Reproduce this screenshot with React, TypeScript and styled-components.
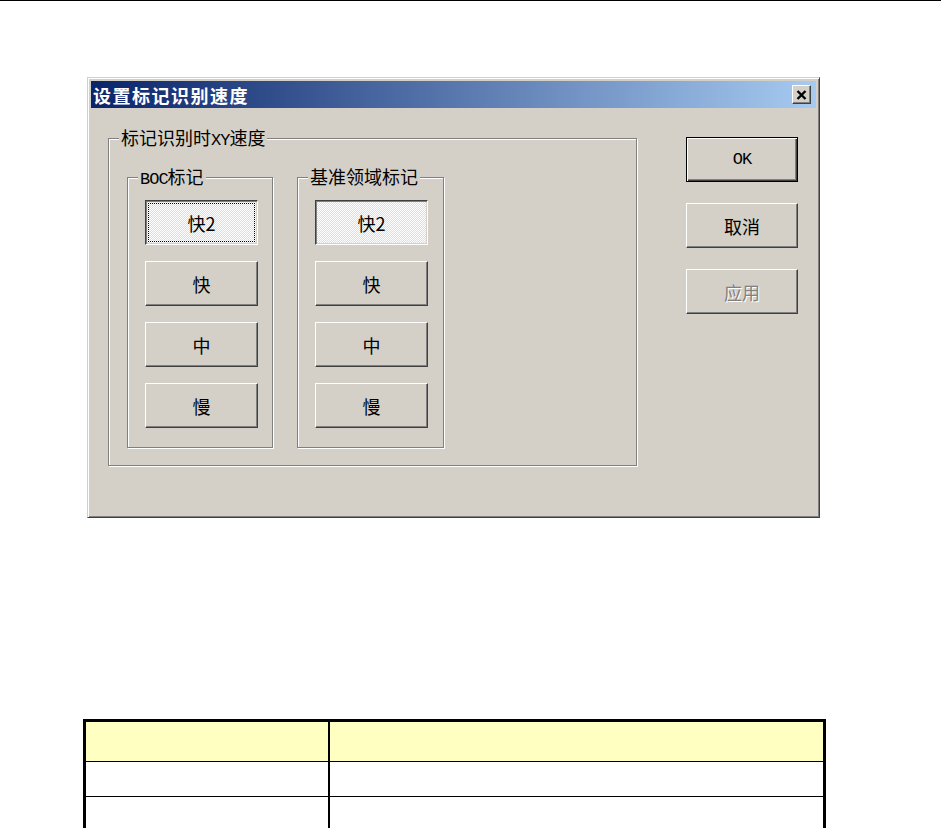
import React from 'react'
import styled, { createGlobalStyle, css } from 'styled-components'

const face = '#d4d0c8'

const GlobalStyle = createGlobalStyle`
  html, body {
    margin: 0;
    height: 828px;
    overflow: hidden;
    background: #fff;
    font-family: "Noto Sans CJK SC", "Noto Sans", sans-serif;
  }
`

const Page = styled.div`
  border-top: 1px solid #000;
`

const Dialog = styled.div`
  margin: 76px 0 0 87px;
  width: 733px;
  height: 441px;
  box-sizing: border-box;
  padding: 3px;
  background: ${face};
  border: 1px solid;
  border-color: ${face} #404040 #404040 ${face};
  box-shadow: inset 1px 1px #fff, inset -1px -1px #808080;
`

const TitleBar = styled.div`
  height: 27px;
  display: flex;
  align-items: center;
  justify-content: space-between;
  padding: 0 5px 0 2px;
  background: linear-gradient(to right, #0a246a, #a6caf0);
`

const Title = styled.span`
  color: #fff;
  font-weight: bold;
  font-size: 18px;
  line-height: 22px;
  letter-spacing: 1.5px;
`

const CloseButton = styled.div`
  width: 19px;
  height: 19px;
  box-sizing: border-box;
  display: flex;
  align-items: center;
  justify-content: center;
  background: ${face};
  border: 1px solid;
  border-color: #fff #404040 #404040 #fff;
  box-shadow: inset -1px -1px #808080;
`

const Body = styled.div`
  display: flex;
  justify-content: space-between;
  align-items: flex-start;
  padding: 30px 18px 0 17px;
`

const GroupBox = styled.div<{ $w: number; $h: number; $outer?: boolean }>`
  position: relative;
  box-sizing: border-box;
  width: ${(p) => p.$w}px;
  height: ${(p) => p.$h}px;
  border: 1px solid #808080;
  box-shadow: inset 1px 1px #fff, 1px 1px #fff;
  display: flex;
  ${(p) =>
    p.$outer
      ? css`
          gap: 24px;
          padding: 38px 0 0 18px;
        `
      : css`
          flex-direction: column;
          gap: 16px;
          padding: 22px 0 0 17px;
        `}
`

const GroupLabel = styled.span`
  position: absolute;
  top: -12px;
  left: 10px;
  padding: 0 2px;
  background: ${face};
  font-size: 18px;
  line-height: 20px;
  color: #000;
  white-space: nowrap;
`

const Latin = styled.span`
  font-family: "Liberation Mono", "DejaVu Sans Mono", monospace;
  font-size: 17px;
  letter-spacing: -1px;
`

const Button = styled.div<{
  $pressed?: boolean
  $focus?: boolean
  $default?: boolean
  $disabled?: boolean
  $w?: number
}>`
  width: ${(p) => p.$w ?? 113}px;
  height: 45px;
  box-sizing: border-box;
  display: flex;
  align-items: center;
  justify-content: center;
  font-size: 18px;
  line-height: 20px;
  color: #000;
  background: ${face};
  border: 1px solid;
  border-color: #fff #404040 #404040 #fff;
  box-shadow: inset -1px -1px #808080;

  ${(p) =>
    p.$pressed &&
    css`
      border-color: #404040 #fff #fff #404040;
      box-shadow: inset 1px 1px #808080, inset -1px -1px ${face};
      background-color: #fff;
      background-image: conic-gradient(#fff 25%, #e0ddd6 0 50%, #fff 0 75%, #e0ddd6 0);
      background-size: 2px 2px;
    `}

  ${(p) =>
    p.$focus &&
    css`
      outline: 1px dotted #000;
      outline-offset: -4px;
    `}

  ${(p) =>
    p.$default &&
    css`
      border: 1px solid #000;
      box-shadow: inset 1px 1px #fff, inset -1px -1px #404040, inset -2px -2px #808080;
    `}

  ${(p) =>
    p.$disabled &&
    css`
      color: #808080;
      text-shadow: 1px 1px 0 #fff;
    `}
`

const SideColumn = styled.div`
  display: flex;
  flex-direction: column;
  gap: 21px;
  margin-top: -1px;
`

const Table = styled.div`
  margin: 201px 0 0 83px;
  width: 743px;
  box-sizing: border-box;
  border: 3px solid #000;
`

const Row = styled.div<{ $head?: boolean; $last?: boolean }>`
  display: grid;
  grid-template-columns: 244px 1fr;
  height: ${(p) => (p.$head ? 40 : 35)}px;
  box-sizing: border-box;
  border-bottom: ${(p) => (p.$last ? 'none' : '1px solid #000')};
  background: ${(p) => (p.$head ? '#ffffc2' : '#fff')};
`

const Cell = styled.div<{ $first?: boolean }>`
  border-right: ${(p) => (p.$first ? '2px solid #000' : 'none')};
`

const speeds = ['快2', '快', '中', '慢']

const SpeedGroup: React.FC<{ label: React.ReactNode; width: number; focus?: boolean }> = ({
  label,
  width,
  focus,
}) => (
  <GroupBox $w={width} $h={271}>
    <GroupLabel>{label}</GroupLabel>
    {speeds.map((s, i) => (
      <Button key={s} $pressed={i === 0} $focus={focus && i === 0}>
        {s}
      </Button>
    ))}
  </GroupBox>
)

const App: React.FC = () => {
  return (
    <Page>
      <GlobalStyle />
      <Dialog>
        <TitleBar>
          <Title>设置标记识别速度</Title>
          <CloseButton>
            <svg width="11" height="10" viewBox="0 0 11 10">
              <path d="M1.5 1 L9.5 9 M9.5 1 L1.5 9" stroke="#000" strokeWidth="2.4" />
            </svg>
          </CloseButton>
        </TitleBar>
        <Body>
          <GroupBox $w={529} $h={328} $outer>
            <GroupLabel>
              标记识别时<Latin>XY</Latin>速度
            </GroupLabel>
            <SpeedGroup
              label={
                <>
                  <Latin>BOC</Latin>标记
                </>
              }
              width={146}
              focus
            />
            <SpeedGroup label="基准领域标记" width={147} />
          </GroupBox>
          <SideColumn>
            <Button $default $w={112}>
              <Latin>OK</Latin>
            </Button>
            <Button $w={112}>取消</Button>
            <Button $disabled $w={112}>
              应用
            </Button>
          </SideColumn>
        </Body>
      </Dialog>
      <Table>
        <Row $head>
          <Cell $first />
          <Cell />
        </Row>
        <Row>
          <Cell $first />
          <Cell />
        </Row>
        <Row $last>
          <Cell $first />
          <Cell />
        </Row>
      </Table>
    </Page>
  )
}

export default App
